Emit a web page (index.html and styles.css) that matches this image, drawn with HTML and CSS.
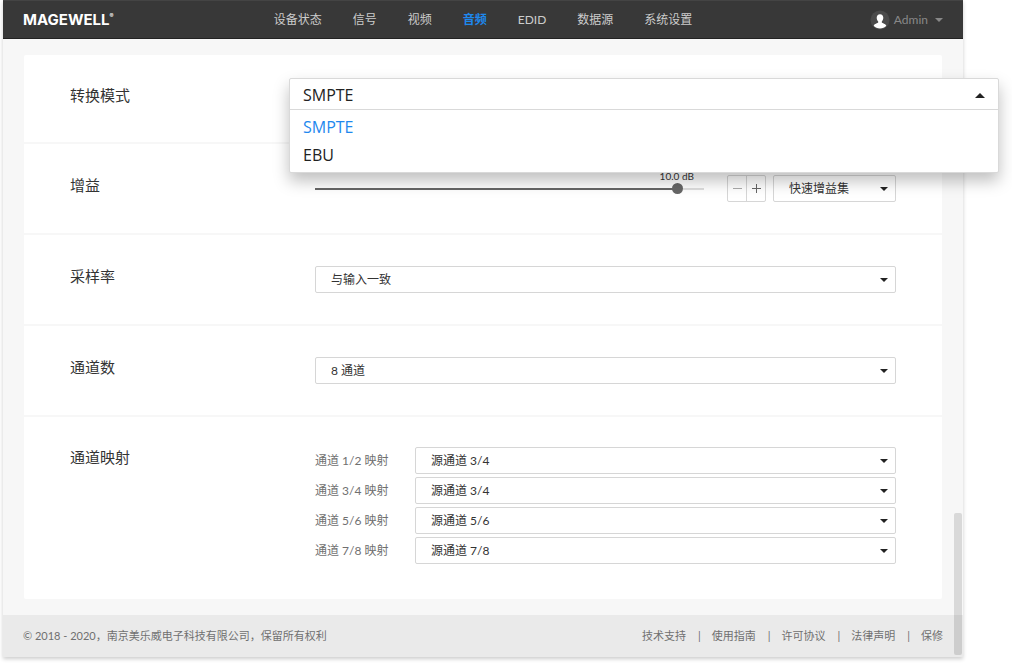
FILE: index.html
```html
<!DOCTYPE html>
<html lang="zh-CN">
<head>
<meta charset="utf-8">
<meta name="viewport" content="width=device-width, initial-scale=1">
<title>音频 - Magewell</title>
<link rel="stylesheet" href="styles.css">
</head>
<body>
<div class="page">
  <header class="header">
    <a class="logo" href="#">MAGEWELL<sup class="logo-mark">®</sup></a>
    <nav class="nav">
      <a class="nav-link" href="#">设备状态</a>
      <a class="nav-link" href="#">信号</a>
      <a class="nav-link" href="#">视频</a>
      <a class="nav-link nav-link-active" href="#" aria-current="page">音频</a>
      <a class="nav-link" href="#">EDID</a>
      <a class="nav-link" href="#">数据源</a>
      <a class="nav-link" href="#">系统设置</a>
    </nav>
    <button class="user" type="button">
      <svg class="avatar" viewBox="0 0 20 20" aria-hidden="true">
        <circle cx="10" cy="10" r="9.5" fill="#4b4b4b"/>
        <path fill="#fff" d="M10 4.2c2.1 0 3.3 1.5 3.3 3.6 0 1.500-.6 2.900-1.500 3.700v1c.4.9 4 1.100 4.500 3.300-1.500 1.800-3.700 2.700-6.300 2.700s-4.800-.9-6.300-2.700c.5-2.200 4.100-2.400 4.500-3.300v-1C7.300 10.700 6.700 9.300 6.700 7.800c0-2.100 1.200-3.600 3.300-3.600z"/>
      </svg>
      <span>Admin</span>
      <span class="user-caret"></span>
    </button>
  </header>

  <main class="main">
    <form class="card">
      <section class="row row-first">
        <h2 class="row-title" id="mode-title">转换模式</h2>
        <div class="control">
          <div class="dropdown">
            <button class="dropdown-toggle" type="button" aria-haspopup="listbox" aria-expanded="true" aria-labelledby="mode-title mode-value">
              <span id="mode-value">SMPTE</span>
              <span class="dropdown-caret"></span>
            </button>
            <ul class="dropdown-list" role="listbox" aria-labelledby="mode-title">
              <li class="dropdown-option dropdown-option-active" role="option" aria-selected="true">SMPTE</li>
              <li class="dropdown-option" role="option" aria-selected="false">EBU</li>
            </ul>
          </div>
        </div>
      </section>

      <section class="row">
        <h2 class="row-title"><label for="gain">增益</label></h2>
        <div class="control gain">
          <div class="slider">
            <output class="slider-value" for="gain" style="left: 93%">10.0 dB</output>
            <input class="slider-input" id="gain" type="range" min="-90" max="16" step="0.5" value="10">
          </div>
          <div class="stepper">
            <button class="stepper-button stepper-minus" type="button" aria-label="减小增益"></button>
            <button class="stepper-button stepper-plus" type="button" aria-label="增大增益"></button>
          </div>
          <div class="select-box gain-preset">
            <select class="select" aria-label="快速增益集"><option>快速增益集</option></select>
          </div>
        </div>
      </section>

      <section class="row">
        <h2 class="row-title"><label for="rate">采样率</label></h2>
        <div class="control">
          <div class="select-box">
            <select class="select" id="rate"><option>与输入一致</option></select>
          </div>
        </div>
      </section>

      <section class="row">
        <h2 class="row-title"><label for="channels">通道数</label></h2>
        <div class="control">
          <div class="select-box">
            <select class="select" id="channels"><option>8 通道</option></select>
          </div>
        </div>
      </section>

      <section class="row">
        <h2 class="row-title">通道映射</h2>
        <div class="control mapping">
          <label class="mapping-label" for="map1">通道 1/2 映射</label>
          <div class="select-box"><select class="select" id="map1"><option>源通道 3/4</option></select></div>
          <label class="mapping-label" for="map2">通道 3/4 映射</label>
          <div class="select-box"><select class="select" id="map2"><option>源通道 3/4</option></select></div>
          <label class="mapping-label" for="map3">通道 5/6 映射</label>
          <div class="select-box"><select class="select" id="map3"><option>源通道 5/6</option></select></div>
          <label class="mapping-label" for="map4">通道 7/8 映射</label>
          <div class="select-box"><select class="select" id="map4"><option>源通道 7/8</option></select></div>
        </div>
      </section>
    </form>
  </main>

  <footer class="footer">
    <p class="copyright">© 2018 - 2020，南京美乐威电子科技有限公司，保留所有权利</p>
    <ul class="footer-links">
      <li><a href="#">技术支持</a></li>
      <li><a href="#">使用指南</a></li>
      <li><a href="#">许可协议</a></li>
      <li><a href="#">法律声明</a></li>
      <li><a href="#">保修</a></li>
    </ul>
  </footer>
  <div class="scroll-thumb"></div>
</div>
</body>
</html>
```
FILE: styles.css
```css
* {
  box-sizing: border-box;
}

body {
  margin: 0;
  background: #fff;
  color: #333;
  font: 12px/18px Lato, "Noto Sans CJK SC", sans-serif;
}

h2, p, ul {
  margin: 0;
  padding: 0;
}

ul {
  list-style: none;
}

a {
  color: inherit;
  text-decoration: none;
}

button, select {
  margin: 0;
  color: inherit;
  font: inherit;
}

.page {
  position: relative;
  margin: 0 49px 6px 3px;
  background: #f7f7f7;
  box-shadow: 0 2px 4px rgba(0, 0, 0, 0.2);
}

/* Header */
.header {
  display: grid;
  grid-template-columns: 1fr auto 1fr;
  align-items: center;
  height: 39px;
  padding: 0 20px;
  background: #383838;
  border-top: 1px solid #444;
  border-bottom: 1px solid #222;
  color: #ccc;
}

.logo {
  display: flex;
  align-items: center;
  color: #fff;
  font: 700 15px/18px Inter, sans-serif;
}

.logo-mark {
  align-self: flex-start;
  font-size: 6px;
  line-height: 10px;
}

.nav {
  display: flex;
  gap: 31px;
}

.nav-link-active {
  color: #1e88ee;
  font-weight: 700;
}

.user {
  display: flex;
  align-items: center;
  justify-self: end;
  gap: 4px;
  padding: 0;
  border: 0;
  background: none;
  color: #888;
}

.avatar {
  width: 20px;
  height: 20px;
}

.user-caret {
  margin-left: 3px;
  border: 4px solid transparent;
  border-top-color: #888;
  border-bottom: 0;
}

/* Settings card */
.main {
  padding: 16px 21px;
}

.card {
  background: #fff;
  border-radius: 2px;
}

.row {
  display: grid;
  grid-template-columns: 245px 1fr;
  padding: 29px 46px 31px;
  border-top: 2px solid #f7f7f7;
}

.row-first {
  padding-top: 28px;
  padding-bottom: 30px;
  border-top: 0;
}

.row:last-child {
  padding-top: 28px;
  padding-bottom: 35px;
}

.row-title {
  font-size: 15px;
  font-weight: 400;
  line-height: 24px;
}

.control {
  position: relative;
  min-height: 27px;
  margin-top: 2px;
}

.select-box {
  position: relative;
}

.select-box::after {
  content: "";
  position: absolute;
  top: 12px;
  right: 8px;
  border: 4px solid transparent;
  border-top-color: #222;
  border-bottom: 0;
  pointer-events: none;
}

.select {
  appearance: none;
  display: block;
  width: 100%;
  height: 27px;
  padding: 0 24px 0 15px;
  border: 1px solid #d6d6d6;
  border-radius: 2px;
  background: transparent;
}

.mapping {
  display: grid;
  grid-template-columns: 100px 1fr;
  row-gap: 3px;
}

.mapping-label {
  color: #707070;
  line-height: 27px;
}

/* Gain */
.gain {
  display: flex;
  align-items: center;
}

.slider {
  position: relative;
  flex: 1;
  height: 27px;
}

.slider-value {
  position: absolute;
  top: -5px;
  font-size: 10px;
  line-height: 12px;
  white-space: nowrap;
  transform: translateX(-50%);
}

.slider-input {
  appearance: none;
  display: block;
  width: 100%;
  height: 27px;
  margin: 0;
  background: linear-gradient(90deg, #666 93%, #ddd 93%) center / 100% 2px no-repeat;
}

.slider-input::-webkit-slider-thumb {
  appearance: none;
  width: 11px;
  height: 11px;
  border-radius: 50%;
  background: #666;
}

.stepper {
  display: flex;
  width: 39px;
  height: 27px;
  margin: 0 7px 0 23px;
  border: 1px solid #d6d6d6;
  border-radius: 2px;
}

.stepper-button {
  flex: 1;
  padding: 0;
  border: 0;
  background: linear-gradient(#aaa, #aaa) center / 9px 1px no-repeat;
}

.stepper-plus {
  border-left: 1px solid #d6d6d6;
  background:
    linear-gradient(#666, #666) center / 9px 1px no-repeat,
    linear-gradient(#666, #666) center / 1px 9px no-repeat;
}

.gain-preset {
  width: 123px;
}

/* Open dropdown */
.dropdown {
  position: absolute;
  z-index: 2;
  top: -7px;
  right: -103px;
  left: -26px;
  border: 1px solid #d9d9d9;
  border-radius: 2px;
  background: #fff;
  box-shadow: 0 8px 16px rgba(0, 0, 0, 0.25);
  color: #222;
  font: 16px/28px "Open Sans", "Noto Sans", sans-serif;
}

.dropdown-toggle {
  display: flex;
  align-items: center;
  justify-content: space-between;
  width: 100%;
  height: 31px;
  padding: 2px 13px 0;
  border: 0;
  border-bottom: 1px solid #d9d9d9;
  background: none;
}

.dropdown-caret {
  border: 5px solid transparent;
  border-top: 0;
  border-bottom-color: #222;
}

.dropdown-list {
  padding: 3px 0;
}

.dropdown-option {
  padding: 0 13px;
}

.dropdown-option-active {
  color: #1e88ee;
}

/* Footer */
.footer {
  display: flex;
  align-items: center;
  justify-content: space-between;
  height: 42px;
  padding: 0 20px;
  background: #eaeaea;
  color: #707070;
  font-size: 11px;
}

.footer-links {
  display: flex;
}

.footer-links li + li::before {
  content: "|";
  margin: 0 11px 0 12px;
}

.scroll-thumb {
  position: absolute;
  right: 1px;
  bottom: 2px;
  width: 8px;
  height: 142px;
  border-radius: 2px;
  background: rgba(0, 0, 0, 0.12);
}
```
